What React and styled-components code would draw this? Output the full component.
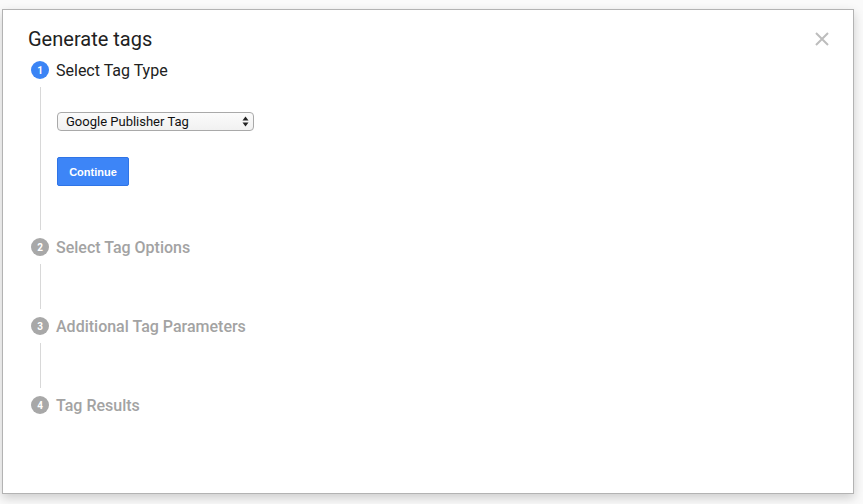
import React from "react";
import styled, { createGlobalStyle } from "styled-components";

const GlobalStyle = createGlobalStyle`
  html, body {
    margin: 0;
    padding: 0;
    background: #fafafa;
    font-family: Roboto, "Liberation Sans", Arial, sans-serif;
  }
`;

const Page = styled.div`
  width: 863px;
  height: 504px;
  box-sizing: border-box;
  padding: 9px 9px 10px 2px;
`;

const Dialog = styled.div`
  height: 100%;
  box-sizing: border-box;
  background: #fff;
  border: 1px solid #b3b3b3;
  box-shadow: 0 4px 10px rgba(0, 0, 0, 0.18);
  padding: 17px 24px 0 25px;
`;

const Header = styled.div`
  display: flex;
  justify-content: space-between;
  align-items: flex-start;
`;

const Title = styled.h1`
  margin: 0;
  font-size: 20px;
  line-height: 24px;
  font-weight: 400;
  color: #212121;
`;

const CloseButton = styled.button`
  margin-top: 5px;
  padding: 0;
  border: none;
  background: none;
  width: 14px;
  height: 14px;
  display: flex;
  cursor: pointer;
`;

const Stepper = styled.div`
  display: flex;
  flex-direction: column;
  margin-top: 9px;
  padding-left: 3px;
`;

const StepHead = styled.div`
  display: flex;
  align-items: center;
  gap: 7px;
  height: 20px;
`;

const Badge = styled.span`
  width: 18px;
  height: 18px;
  border-radius: 50%;
  background: ${(p) => (p.$active ? "#3b84f5" : "#a8a8a8")};
  color: #fff;
  font-size: 10px;
  font-weight: 700;
  display: flex;
  align-items: center;
  justify-content: center;
`;

const StepLabel = styled.span`
  font-size: 16px;
  line-height: 20px;
  padding-top: 1px;
  color: ${(p) => (p.$active ? "#212121" : "#a3a3a3")};
  font-weight: ${(p) => (p.$active ? 400 : 500)};
`;

const StepBody = styled.div`
  margin: 7px 0 7px 9px;
  border-left: 1px solid #d8d8d8;
  padding: ${(p) => (p.$open ? "25px 0 44px 16px" : "0")};
  height: ${(p) => (p.$open ? "auto" : "45px")};
  display: flex;
  flex-direction: column;
  align-items: flex-start;
  gap: 26px;
`;

const SelectBox = styled.div`
  width: 197px;
  height: 19px;
  box-sizing: border-box;
  display: flex;
  align-items: center;
  border: 1px solid #a9a9a9;
  border-radius: 4px;
  background: linear-gradient(#fbfbfb, #f1f1f1);
  padding: 0 4px 0 8px;
`;

const NativeSelect = styled.select`
  appearance: none;
  flex: 1;
  border: none;
  background: transparent;
  padding: 0;
  font-family: Roboto, "Liberation Sans", Arial, sans-serif;
  font-size: 13px;
  color: #111;
  outline: none;
`;

const PrimaryButton = styled.button`
  width: 72px;
  height: 29px;
  border: 1px solid #2f74e6;
  border-radius: 2px;
  background: #3d85f7;
  color: #fff;
  font-family: "Liberation Sans", Arial, sans-serif;
  font-weight: 700;
  font-size: 11px;
  cursor: pointer;
`;

const steps = [
  { n: 1, label: "Select Tag Type" },
  { n: 2, label: "Select Tag Options" },
  { n: 3, label: "Additional Tag Parameters" },
  { n: 4, label: "Tag Results" },
];

const Arrows = () => (
  <svg width="7" height="11" viewBox="0 0 7 11">
    <path d="M3.5 0.5 L6.5 4.5 H0.5 Z" fill="#222" />
    <path d="M3.5 10.5 L6.5 6.5 H0.5 Z" fill="#222" />
  </svg>
);

const CloseIcon = () => (
  <svg width="14" height="14" viewBox="0 0 14 14">
    <path d="M1 1 L13 13 M13 1 L1 13" stroke="#bdbdbd" strokeWidth="2" />
  </svg>
);

export default function App() {
  return (
    <>
      <GlobalStyle />
      <Page>
        <Dialog>
          <Header>
            <Title>Generate tags</Title>
            <CloseButton aria-label="Close">
              <CloseIcon />
            </CloseButton>
          </Header>
          <Stepper>
            {steps.map((s) => {
              const active = s.n === 1;
              return (
                <div key={s.n}>
                  <StepHead>
                    <Badge $active={active}>{s.n}</Badge>
                    <StepLabel $active={active}>{s.label}</StepLabel>
                  </StepHead>
                  {s.n < 4 && (
                    <StepBody $open={active}>
                      {active && (
                        <>
                          <SelectBox>
                            <NativeSelect defaultValue="gpt">
                              <option value="gpt">Google Publisher Tag</option>
                            </NativeSelect>
                            <Arrows />
                          </SelectBox>
                          <PrimaryButton>Continue</PrimaryButton>
                        </>
                      )}
                    </StepBody>
                  )}
                </div>
              );
            })}
          </Stepper>
        </Dialog>
      </Page>
    </>
  );
}
